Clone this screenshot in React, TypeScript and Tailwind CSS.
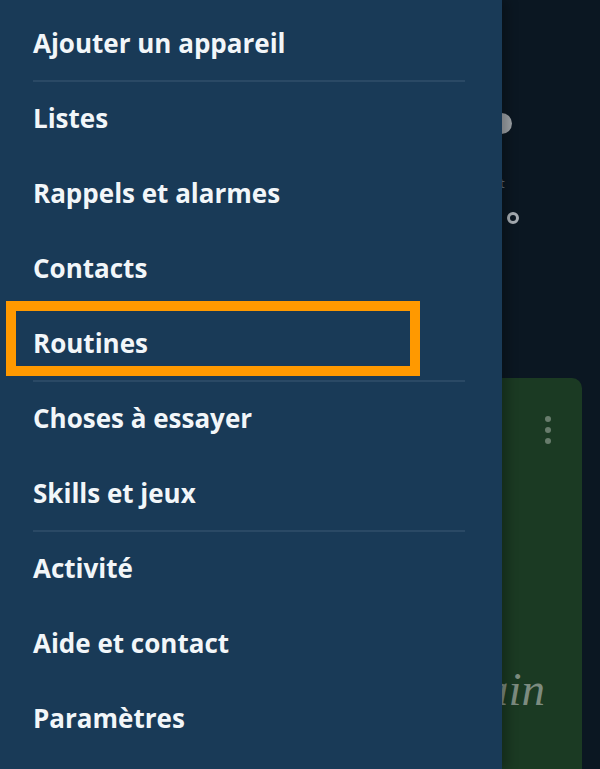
const items = [
  { label: "Ajouter un appareil", divider: true },
  { label: "Listes" },
  { label: "Rappels et alarmes" },
  { label: "Contacts" },
  { label: "Routines", divider: true, highlight: true },
  { label: "Choses à essayer" },
  { label: "Skills et jeux", divider: true },
  { label: "Activité" },
  { label: "Aide et contact" },
  { label: "Paramètres" },
];

function Background() {
  return (
    <div className="flex h-[769px] w-[600px] flex-col bg-[#0b1722] pl-[380px]">
      <div className="relative h-[378px] shrink-0">
        <div className="absolute left-[111px] top-[113px] h-[21px] w-[21px] rounded-full bg-[#9ea3a8]" />
        <span className="absolute left-[120px] top-[174px] text-[13px] text-[#5d6a75]">t</span>
        <div className="absolute left-[127px] top-[212px] h-[12px] w-[12px] rounded-full border-[3px] border-[#a7adb3]" />
      </div>
      <div className="mr-[18px] flex flex-1 flex-col rounded-tr-[10px] bg-[#1b3a23]">
        <div className="flex justify-end pt-[38px] pr-[31px]">
          <div className="flex flex-col gap-[5px]">
            <span className="h-[6px] w-[6px] rounded-full bg-[#687c6c]" />
            <span className="h-[6px] w-[6px] rounded-full bg-[#687c6c]" />
            <span className="h-[6px] w-[6px] rounded-full bg-[#687c6c]" />
          </div>
        </div>
        <div className="mt-[210px] pr-[37px] text-right font-['Liberation_Serif',serif] text-[47px] italic text-[#7d8c80]">
          Demain
        </div>
      </div>
    </div>
  );
}

function Drawer() {
  return (
    <nav className="absolute left-0 top-0 h-full w-[502px] bg-[#193a57] pt-[6px] font-['Open_Sans',sans-serif] shadow-[6px_0_10px_rgba(0,0,0,0.25)]">
      {items.map((item) => (
        <div key={item.label} className="relative h-[75px]">
          <div className="flex h-[74px] items-center pl-[33px] text-[26px] font-bold text-[#f2f6f9]">
            {item.label}
          </div>
          {item.divider && (
            <div className="ml-[33px] mr-[37px] h-[2px] bg-[#2a4965]" />
          )}
          {item.highlight && (
            <div className="absolute left-[6px] top-[-5px] h-[75px] w-[414px] border-[10px] border-[#ff9900]" />
          )}
        </div>
      ))}
    </nav>
  );
}

export default function App() {
  return (
    <div className="relative h-[769px] w-[600px] overflow-hidden">
      <Background />
      <Drawer />
    </div>
  );
}
